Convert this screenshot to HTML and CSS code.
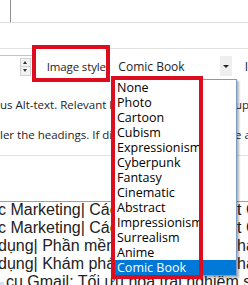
FILE: index.html
```html
<!DOCTYPE html>
<html lang="en">
<head>
    <meta charset="UTF-8">
    <title>Image style</title>
    <link rel="stylesheet" href="styles.css">
</head>
<body>
    <div class="top">
        <div class="textarea-edge"></div>
    </div>
    <div class="band"></div>

    <div class="field-row">
        <div class="num">
            <span class="spin"><i class="up"></i><i class="down"></i></span>
        </div>
        <label class="label">Image style</label>
        <div class="select">
            <span class="select-value">Comic Book</span>
            <span class="select-btn"><i class="caret"></i></span>
        </div>
        <span class="next">I</span>
    </div>

    <div class="help first"><span class="l">us Alt-text. Relevant k</span><span class="r">up</span></div>
    <div class="help"><span class="l">ler the headings. If dis</span><span class="r">e a</span></div>
    <div class="rule"></div>

    <div class="posts">
        <div class="post"><span class="l">c Marketing| Các</span><span class="r">t C</span></div>
        <div class="post"><span class="l">c Marketing| Các</span><span class="r">t C</span></div>
        <div class="post"><span class="l">dụng| Phần mềm</span><span class="r">ha</span></div>
        <div class="post"><span class="l">dụng| Khám phá</span><span class="r">ha</span></div>
        <div class="post last"><span class="sel"></span>cụ Gmail: Tối ưu hoá trải nghiệm sử</div>
    </div>

    <ul class="dropdown">
        <li>None</li>
        <li>Photo</li>
        <li>Cartoon</li>
        <li>Cubism</li>
        <li>Expressionism</li>
        <li>Cyberpunk</li>
        <li>Fantasy</li>
        <li>Cinematic</li>
        <li>Abstract</li>
        <li>Impressionism</li>
        <li>Surrealism</li>
        <li>Anime</li>
        <li class="active">Comic Book</li>
    </ul>

    <div class="mark mark-label"></div>
    <div class="mark mark-list"></div>
</body>
</html>
```

FILE: styles.css
```css
body {
    margin: 0;
    width: 248px;
    height: 285px;
    overflow: hidden;
    background: #fff;
    color: #1d2327;
    font-family: "Open Sans", "Noto Sans", sans-serif;
    font-size: 12px;
    position: relative;
}
.top {
    height: 22px;
    border-bottom: 1px solid #dcdcde;
}
.textarea-edge {
    margin-left: 10px;
    height: 22px;
    border-left: 1px solid #8c8f94;
}
.band {
    height: 25px;
    border-bottom: 1px solid #e2e2e2;
}
.field-row {
    display: flex;
    align-items: center;
    height: 22px;
    margin-top: 6px;
}
.num {
    width: 32px;
    height: 22px;
    box-sizing: border-box;
    border-top: 1px solid #c3c4c7;
    display: flex;
    justify-content: flex-end;
    align-items: center;
    padding-right: 1px;
}
.spin {
    display: flex;
    flex-direction: column;
    width: 9px;
    height: 16px;
    border: 1px solid #d0d0d0;
    background: #f3f3f3;
}
.spin i {
    flex: 1;
    position: relative;
}
.spin .down {
    border-top: 1px solid #d0d0d0;
}
.spin i::after {
    content: "";
    position: absolute;
    left: 2px;
    border-left: 2.5px solid transparent;
    border-right: 2.5px solid transparent;
}
.spin .up::after {
    top: 2px;
    border-bottom: 3px solid #333;
}
.spin .down::after {
    top: 2px;
    border-top: 3px solid #333;
}
.label {
    margin-left: 15px;
    width: 72px;
    font-size: 11.5px;
    letter-spacing: -0.15px;
}
.select {
    display: flex;
    align-items: center;
    width: 114px;
    height: 20px;
}
.select-value {
    flex: 1;
}
.select-btn {
    width: 12px;
    height: 20px;
    background: #eeeeee;
    display: flex;
    align-items: center;
    justify-content: center;
}
.caret {
    border-left: 3px solid transparent;
    border-right: 3px solid transparent;
    border-top: 3px solid #222;
}
.next {
    margin-left: 13px;
}
.help {
    display: flex;
    height: 15px;
    line-height: 15px;
    white-space: nowrap;
    font-size: 11.5px;
}
.help .l {
    width: 111px;
    flex: none;
    overflow: hidden;
    margin-left: -3px;
    padding-left: 3px;
}
.help .r {
    margin-left: 124px;
}
.help.first {
    margin-top: 20px;
}
.help + .help {
    margin-top: 15px;
}
.rule {
    margin-top: 13px;
    border-top: 1px solid #e2e2e2;
}
.posts {
    margin-top: 45px;
    border-top: 1px solid #a0a0a0;
    font-family: "Liberation Sans", Arial, sans-serif;
    font-size: 16px;
    color: #222;
}
.post {
    display: flex;
    height: 18px;
    line-height: 15px;
    white-space: nowrap;
}
.post .l {
    width: 111px;
    flex: none;
    overflow: hidden;
    text-indent: -2px;
}
.post .r {
    margin-left: 126px;
}
.post.last {
    display: block;
    margin-left: -2px;
}
.sel {
    display: inline-block;
    width: 6px;
    height: 8px;
    margin-right: 2px;
    background: #cfe3f7;
    vertical-align: -3px;
}
.dropdown {
    position: absolute;
    left: 111px;
    top: 79px;
    width: 124px;
    margin: 0;
    padding: 0;
    list-style: none;
    background: #fff;
    border: 1px solid #7a9cc6;
    box-shadow: 2px 2px 2px rgba(0, 0, 0, 0.3);
    color: #000;
    font-size: 12.5px;
}
.dropdown li {
    height: 15px;
    line-height: 15px;
    padding-left: 5px;
}
.dropdown li.active {
    background: #0078d7;
    color: #fff;
}
.mark {
    position: absolute;
    border: 4px solid #dc0d1e;
    box-sizing: border-box;
}
.mark-label {
    left: 32px;
    top: 45px;
    width: 78px;
    height: 37px;
}
.mark-list {
    left: 111px;
    top: 76px;
    width: 92px;
    height: 203px;
}
```
